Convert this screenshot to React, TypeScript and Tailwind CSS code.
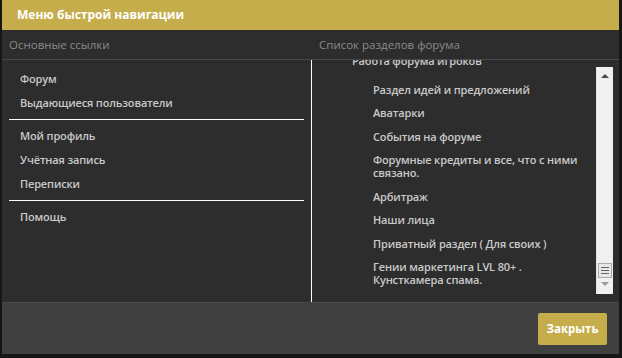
const leftTop = ["Форум", "Выдающиеся пользователи"];
const leftMid = ["Мой профиль", "Учётная запись", "Переписки"];
const leftBottom = ["Помощь"];

const sections = [
  "Раздел идей и предложений",
  "Аватарки",
  "События на форуме",
  "Форумные кредиты и все, что с ними связано.",
  "Арбитраж",
  "Наши лица",
  "Приватный раздел ( Для своих )",
  "Гении маркетинга LVL 80+ . Кунсткамера спама.",
];

const LinkItem = ({ label }: { label: string }) => (
  <div className="h-6 flex items-center pl-[18px] text-[11px] tracking-[-0.15px] font-semibold text-[#c9c9c9]">
    {label}
  </div>
);

const Scrollbar = () => (
  <div className="w-[17px] mt-[7px] mb-[8px] bg-[#f0f0f0] border-l border-[#e2e2e2] flex flex-col items-center relative">
    <div className="mt-[7px] w-0 h-0 border-l-[4px] border-r-[4px] border-b-[4px] border-l-transparent border-r-transparent border-b-[#4a4a4a]" />
    <div className="absolute left-[1px] top-[196px] w-[14px] h-[15px] bg-[#e8e8e8] border border-[#a9a9a9] flex flex-col items-center justify-center gap-[2px]">
      <div className="w-[8px] h-px bg-[#666]" />
      <div className="w-[8px] h-px bg-[#666]" />
      <div className="w-[8px] h-px bg-[#666]" />
    </div>
    <div className="mt-auto mb-[8px] w-0 h-0 border-l-[4px] border-r-[4px] border-t-[4px] border-l-transparent border-r-transparent border-t-[#9a9a9a]" />
  </div>
);

export default function App() {
  return (
    <div className="w-[622px] h-[358px] bg-[#161616] font-['Open_Sans',sans-serif] pl-[2px] pr-[3px]">
      <div className="w-[617px] h-[354px] flex flex-col bg-[#2d2d2d]">
        <div className="h-[30px] bg-[#c5ad4b] flex items-center pl-[15px] text-[12px] font-bold text-white">
          Меню быстрой навигации
        </div>
        <div className="h-[30px] flex border-b border-[#474747] text-[11.5px] text-[#8a8a8a]">
          <div className="w-[309px] pl-[7px] flex items-center">Основные ссылки</div>
          <div className="pl-[8px] flex items-center">Список разделов форума</div>
        </div>
        <div className="flex-1 flex min-h-0">
          <div className="w-[309px] pt-[7px]">
            {leftTop.map((l) => (
              <LinkItem key={l} label={l} />
            ))}
            <div className="mx-[7px] my-[4px] h-px bg-white" />
            {leftMid.map((l) => (
              <LinkItem key={l} label={l} />
            ))}
            <div className="mx-[7px] my-[4px] h-px bg-white" />
            {leftBottom.map((l) => (
              <LinkItem key={l} label={l} />
            ))}
          </div>
          <div className="w-px bg-white" />
          <div className="flex-1 flex min-w-0">
            <div className="flex-1 overflow-hidden text-[11px] tracking-[-0.15px] leading-[13px] font-semibold text-[#c9c9c9]">
              <div className="mt-[-6px] pl-[40px]">Работа форума игроков</div>
              <div className="flex flex-col gap-[10.5px] mt-[15.5px] pl-[61px] pr-[4px]">
                {sections.map((s) => (
                  <div key={s}>{s}</div>
                ))}
              </div>
            </div>
            <Scrollbar />
            <div className="w-[6px]" />
          </div>
        </div>
        <div className="h-[52px] bg-[#404040] border-t border-[#4a4a4a] flex items-center justify-end pr-[12px]">
          <button className="w-[69px] h-[32px] bg-[#c5ad4b] rounded-[2px] text-[11.5px] font-bold text-white">
            Закрыть
          </button>
        </div>
      </div>
    </div>
  );
}
